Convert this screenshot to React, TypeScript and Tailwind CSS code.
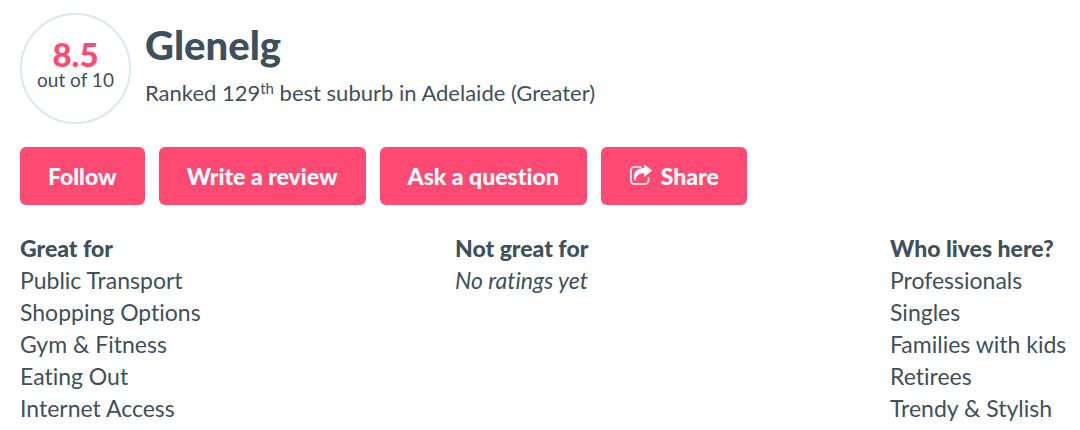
const buttonClass =
  "flex h-[58px] items-center justify-center rounded-[6px] bg-[#ff4a73] px-7 text-[23px] leading-[32px] font-black text-white";

const groups = [
  {
    title: "Great for",
    items: ["Public Transport", "Shopping Options", "Gym & Fitness", "Eating Out", "Internet Access"],
  },
  { title: "Not great for", items: [] },
  {
    title: "Who lives here?",
    items: ["Professionals", "Singles", "Families with kids", "Retirees", "Trendy & Stylish"],
  },
];

function ShareIcon() {
  return (
    <svg className="h-6 w-6 shrink-0" viewBox="0 0 24 24" fill="none" aria-hidden="true">
      <path
        d="M12 3H5.500A3.700 3.700 0 0 0 1.800 6.700V16.300A3.700 3.700 0 0 0 5.500 20H15.800A3.700 3.700 0 0 0 19.500 16.300V14"
        stroke="currentColor"
        strokeWidth="1.700"
        strokeLinecap="round"
      />
      <path
        d="M15.200 0.500 23.300 6.400 15.200 12.700V9.200C10.200 9 7.500 11 6 17.200 3 10 6.500 3.900 15.200 3.900Z"
        fill="currentColor"
      />
    </svg>
  );
}

export default function App() {
  return (
    <main className="bg-white px-5 pt-[13px] font-['Lato',sans-serif] text-[23px] leading-[32px] text-[#3e505b] [font-variant-ligatures:none]">
      <header className="flex gap-[14px]">
        <div className="flex size-[111px] shrink-0 flex-col items-center rounded-full border-2 border-[#dfe7ee] pt-[23px]">
          <strong className="text-[33px] leading-[32px] font-black text-[#ff4a73]">8.5</strong>
          <span className="text-[19px] leading-[20px]">out of 10</span>
        </div>
        <div className="pt-2">
          <h1 className="text-[40px] leading-[48px] font-black">Glenelg</h1>
          <p className="mt-2 text-[22px]">
            Ranked 129<sup className="text-[15px]">th</sup> best suburb in Adelaide (Greater)
          </p>
        </div>
      </header>
      <div className="mt-[23px] flex flex-wrap gap-[14px]">
        <button type="button" className={buttonClass}>Follow</button>
        <button type="button" className={buttonClass}>Write a review</button>
        <button type="button" className={buttonClass}>Ask a question</button>
        <button type="button" className={`${buttonClass} gap-2`}>
          <ShareIcon />
          Share
        </button>
      </div>
      <div className="mt-[27px] grid grid-cols-[1fr_1fr_170px] whitespace-nowrap">
        {groups.map((group) => (
          <section key={group.title}>
            <h2 className="font-black">{group.title}</h2>
            {group.items.length > 0 ? (
              <ul>
                {group.items.map((item) => (
                  <li key={item}>{item}</li>
                ))}
              </ul>
            ) : (
              <p className="italic">No ratings yet</p>
            )}
          </section>
        ))}
      </div>
    </main>
  );
}
